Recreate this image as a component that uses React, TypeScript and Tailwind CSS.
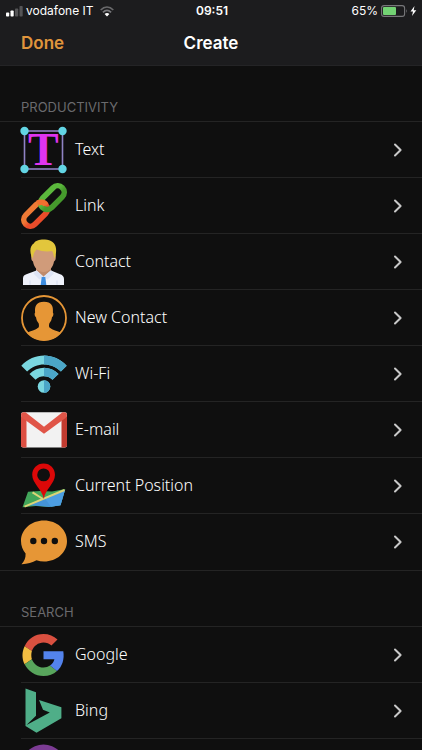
import React from "react";

function TextIcon() {
  return (
    <svg viewBox="0 0 46 46" className="size-[46px] overflow-visible" aria-hidden="true">
      <rect x="3.5" y="4" width="38" height="38" fill="none" stroke="#8f83c4" strokeWidth="1.6" />
      <text x="22.4" y="38.2" textAnchor="middle" fill="#e034f0" className="font-['Liberation_Serif',serif] text-[46px] font-bold">
        T
      </text>
      <g fill="#62d5e4">
        <circle cx="3.5" cy="4" r="4.2" />
        <circle cx="41.5" cy="4" r="4.2" />
        <circle cx="3.5" cy="42" r="4.2" />
        <circle cx="41.5" cy="42" r="4.2" />
      </g>
    </svg>
  );
}

function LinkIcon() {
  return (
    <svg viewBox="0 0 46 46" className="size-[46px]" aria-hidden="true" fill="none" strokeWidth="5.6">
      <defs>
        <linearGradient id="linkOrange" x1="0" y1="0" x2="0" y2="1">
          <stop offset="0.3" stopColor="#ef7a35" />
          <stop offset="0.7" stopColor="#ea4c2a" />
        </linearGradient>
        <linearGradient id="linkGreen" x1="0" y1="0" x2="0" y2="1">
          <stop offset="0.3" stopColor="#5bb83c" />
          <stop offset="0.7" stopColor="#459a2c" />
        </linearGradient>
      </defs>
      <rect x="-14" y="-6.5" width="28" height="13" rx="6.5" transform="translate(14.6 31.4) rotate(-45)" stroke="url(#linkOrange)" />
      <rect x="-14" y="-6.5" width="28" height="13" rx="6.5" transform="translate(31.4 14.6) rotate(-45)" stroke="url(#linkGreen)" />
      <path d="M16.500 20.300C19.500 18.600 23.300 18.900 25 22" stroke="#f0702f" />
    </svg>
  );
}

function ContactIcon() {
  return (
    <svg viewBox="0 0 46 46" className="size-[46px]" aria-hidden="true">
      <path d="M15 27h15v10l-7.500 5L15 39z" fill="#c08b6c" />
      <path d="M2 46V39.500C2 37 3.500 35.700 6 35L15.500 31.500 22.500 38 30 31.500 38.500 35C41.500 36 43 37.500 43 40V46z" fill="#eff2fb" />
      <path d="M9 46v-4.500M36 46v-4.500" stroke="#d5dcf0" strokeWidth="1" />
      <path d="M15.500 31.200 12.500 34.500 18.500 40.500 22.500 37.600zM30 31.200 33 34.500 26.500 40.500 22.500 37.600z" fill="#dde4f5" />
      <path d="M20.700 38h3.600l1 8h-5.600z" fill="#3d8de0" />
      <path d="M11.500 13C11.500 8 33.500 8 33.500 13L34.700 16C35 20 34.500 21.500 33 22.500 32 28.500 28 33 22.500 33S13 28.500 12 22.500C10.500 21.500 10 20 10.300 16z" fill="#d09b7a" />
      <path d="M11.500 19.500C8 13 9 6.500 13 4.200 14.500 1.500 19 .3 24 .6 30 .8 34.500 4 35 9.500 35.400 13 34.800 16.500 33.500 19.500 32.500 17 32.700 14 31 12 27 13 20 12.500 15.800 10.500 13 12.500 12.500 16 11.500 19.500z" fill="#e2c63c" />
    </svg>
  );
}

function NewContactIcon() {
  return (
    <svg viewBox="0 0 46 46" className="size-[46px]" aria-hidden="true">
      <circle cx="23" cy="23" r="22" fill="none" stroke="#e69636" strokeWidth="1.800" />
      <path d="M6 37.800C9.500 36 14.500 35.200 17.500 32.500 18.200 31.500 18 29.500 17.600 28.200 16 26.500 15.300 24.500 15 22.300 13.500 21.500 13.200 18.500 14.100 17.600 13.500 11 15.500 6.800 23 6.800S32.500 11 31.900 17.600C32.800 18.500 32.500 21.500 31 22.300 30.700 24.500 30 26.500 28.400 28.200 28 29.500 27.800 31.500 28.500 32.500 31.500 35.200 36.500 36 40 37.800 36 42.800 30 45.500 23 45.500S10 42.800 6 37.800z" fill="#e69636" />
    </svg>
  );
}

function WifiIcon() {
  return (
    <svg viewBox="0 0 46 46" className="size-[46px]" aria-hidden="true">
      <defs>
        <clipPath id="wifiRight">
          <path d="M23 0h23v46H23z" />
        </clipPath>
        <g id="wifiShape">
          <path d="M.3 14.800C13 1.200 33 1.200 45.700 14.800L39.900 20.500C30.500 11 15.500 11 6.100 20.500z" />
          <path d="M8.500 23C16.600 14.800 29.400 14.800 37.500 23L31.500 28.700C26.700 24.200 19.300 24.200 14.500 28.700z" />
          <circle cx="23" cy="35.500" r="6.300" />
        </g>
      </defs>
      <use href="#wifiShape" fill="#7ad7e0" />
      <use href="#wifiShape" fill="#4ba6c8" clipPath="url(#wifiRight)" />
    </svg>
  );
}

function MailIcon() {
  return (
    <svg viewBox="0 0 46 46" className="size-[46px]" aria-hidden="true">
      <rect x="0" y="5.300" width="46" height="35.200" rx="2.200" fill="#f2f2f2" />
      <path d="M0 9v29.300Q0 40.500 2.200 40.500H5.500V12z" fill="#dc4f42" />
      <path d="M46 9v29.300Q46 40.500 43.800 40.500H40.500V12z" fill="#c23b30" />
      <path d="M0 8Q0 5.300 2.500 5.300H4.500L23 19.700 41.500 5.300H43.500Q46 5.300 46 8 46 9.700 44.500 10.900L23 26.700 1.500 10.900Q0 9.700 0 8z" fill="#e05548" />
    </svg>
  );
}

function PositionIcon() {
  return (
    <svg viewBox="0 0 46 46" className="size-[46px]" aria-hidden="true">
      <path d="M7 28.800 19 28 31 28.500 44.300 26 39.500 42.300 28 44 15 43 1.500 44.300z" fill="#42a65a" />
      <path d="M20 35.500 44 27 39.500 42.300 28 44 13 42.500 8 42.500z" fill="#4594d8" />
      <path d="M24 35.500 30 43.700 39.500 42.300 44 27z" fill="#4d9ee2" />
      <path d="M11.500 29.300 22 36M3.500 43.600 43.500 27" stroke="#dcd477" strokeWidth="2" fill="none" />
      <path d="M22.600 35.500C21.600 27 11.200 20.500 11.200 11.800 11.200 5.500 16 .6 22.600.6S34 5.500 34 11.800C34 20.500 23.800 27 23 35.500zM22.600 5.500a6.400 6.400 0 1 0 0 12.800 6.400 6.400 0 0 0 0-12.800z" fill="#dc0808" fillRule="evenodd" />
    </svg>
  );
}

function SmsIcon() {
  return (
    <svg viewBox="0 0 46 46" className="size-[46px]" aria-hidden="true">
      <path d="M23 1.500C10 1.500 0 10.500 0 22 0 27 1.700 31 4.600 34.500 4.800 39 3.200 42.500.5 45.200 6 45.300 11.500 43.700 15.500 41.300 18 42.100 20.500 42.500 23 42.500 36 42.500 46 33.500 46 22S36 1.500 23 1.500z" fill="#e69636" />
      <g fill="#0f0f0f">
        <circle cx="12.300" cy="22" r="3.200" />
        <circle cx="23" cy="22" r="3.200" />
        <circle cx="33.800" cy="22" r="3.200" />
      </g>
    </svg>
  );
}

function GoogleIcon() {
  return (
    <svg viewBox="0 0 46 46" className="size-[46px]" aria-hidden="true">
      <path d="M3.600 14.200C7.200 6.600 14.300 2 22.500 2 28 2 32.800 4 36.500 7.500L30.400 13.600C28.300 11.600 25.700 10.500 22.500 10.500 17.200 10.500 12.700 14 10.900 19z" fill="#d95040" />
      <path d="M3.600 14.200C.8 20 .8 26.500 3.600 32.300L10.900 27.200C10.100 24.600 10.100 21.600 10.900 19z" fill="#f2bd42" />
      <path d="M3.600 32.300C7.200 39.500 14.200 44 22.500 44 27.800 44 32.500 42.200 36 39L29 33.500C27.200 34.700 25 35.500 22.500 35.500 17.200 35.500 12.700 32 10.900 27.200z" fill="#58a55c" />
      <path d="M22.500 19.200H42.300C43.600 27 41.300 34.500 36 39L29 33.500C31.300 32 32.900 29.800 33.400 27.200H22.500z" fill="#5383ec" />
    </svg>
  );
}

function BingIcon() {
  return (
    <svg viewBox="0 0 46 46" className="size-[46px]" aria-hidden="true">
      <path d="M4.500 .5 15 4.300V27.700L5.500 37 28.800 24.500 22 21.800 18 12 40.400 19.300V30.300L15.500 44.700 4.500 38.100z" fill="#4fae88" />
    </svg>
  );
}

function YahooIcon() {
  return (
    <svg viewBox="0 0 46 46" className="size-[46px]" aria-hidden="true">
      <circle cx="22.500" cy="23" r="22.500" fill="#7c3c94" />
      <path d="M12 14l10 12v9M33 14 22 26" stroke="#fff" strokeWidth="4" fill="none" />
    </svg>
  );
}

const sections = [
  {
    title: "PRODUCTIVITY",
    items: [
      { label: "Text", icon: <TextIcon /> },
      { label: "Link", icon: <LinkIcon /> },
      { label: "Contact", icon: <ContactIcon /> },
      { label: "New Contact", icon: <NewContactIcon /> },
      { label: "Wi-Fi", icon: <WifiIcon /> },
      { label: "E-mail", icon: <MailIcon /> },
      { label: "Current Position", icon: <PositionIcon /> },
      { label: "SMS", icon: <SmsIcon /> },
    ],
  },
  {
    title: "SEARCH",
    items: [
      { label: "Google", icon: <GoogleIcon /> },
      { label: "Bing", icon: <BingIcon /> },
      { label: "Yahoo", icon: <YahooIcon /> },
    ],
  },
];

function StatusBar() {
  return (
    <div className="grid h-[22px] grid-cols-[1fr_auto_1fr] items-center pr-1 pl-[6px] text-[12px] leading-none">
      <div className="flex items-center gap-[3px]">
        <svg viewBox="0 0 17 11" className="h-[11px] w-[17px]" aria-hidden="true">
          <rect x="0" y="6.500" width="3.200" height="4" rx=".8" fill="#fff" />
          <rect x="4.500" y="4.500" width="3.200" height="6" rx=".8" fill="#fff" />
          <rect x="9" y="2.500" width="3.200" height="8" rx=".8" fill="#555557" />
          <rect x="13.500" y="0" width="3.200" height="10.500" rx=".8" fill="#555557" />
        </svg>
        <span>vodafone IT</span>
        <svg viewBox="0 0 14 11" className="ml-[3px] h-[11px] w-[14px]" aria-hidden="true" fill="none" strokeWidth="1.700">
          <path d="M.7 4C4.500.2 9.500.2 13.300 4" stroke="#69696b" />
          <path d="M2.900 6.300C5.400 3.900 8.600 3.900 11.100 6.300" stroke="#77777a" />
          <path d="M4.600 7.900C6 6.600 8 6.600 9.400 7.900L7 10.500z" fill="#fff" />
        </svg>
      </div>
      <span className="font-semibold">09:51</span>
      <div className="flex items-center justify-end gap-[3px]">
        <span>65%</span>
        <svg viewBox="0 0 37 12" className="h-[12px] w-[37px]" aria-hidden="true">
          <rect x=".6" y=".6" width="23" height="10.800" rx="2.500" fill="none" stroke="#77777a" strokeWidth="1.100" />
          <rect x="2" y="2" width="13" height="8" rx="1" fill="#73d374" />
          <path d="M25 4q1.500 2 0 4z" fill="#77777a" />
          <path d="M33.500 1 29.500 6.500H32L31 11 35.300 5.200H32.700z" fill="#fff" />
        </svg>
      </div>
    </div>
  );
}

function Chevron() {
  return (
    <svg viewBox="0 0 10 14" className="h-[14px] w-[10px]" aria-hidden="true">
      <path d="M2 1.500 7.600 7 2 12.500" fill="none" stroke="#c9c9c9" strokeWidth="2" strokeLinecap="round" strokeLinejoin="round" />
    </svg>
  );
}

export default function App() {
  return (
    <div className="flex h-screen flex-col bg-[#0f0f0f] font-['Inter',sans-serif] text-white">
      <header className="shrink-0 border-b border-[#242426] bg-[#1c1c1e]">
        <StatusBar />
        <div className="grid h-[43px] grid-cols-[1fr_auto_1fr] items-center px-[21px] text-[17px] font-semibold">
          <button type="button" className="justify-self-start text-[#e0953c]">
            Done
          </button>
          <h1>Create</h1>
        </div>
      </header>
      <main className="min-h-0 flex-1 overflow-y-auto [scrollbar-width:none]">
        {sections.map((section) => (
          <section key={section.title}>
            <h2 className="flex h-14 items-end border-b border-[#242424] px-[21px] pb-1 text-[13px] text-[#6a6a6d]">
              {section.title}
            </h2>
            <ul className="border-b border-[#242424]">
              {section.items.map((item, i) => (
                <li key={item.label} className="pl-[21px]">
                  <button
                    type="button"
                    className={`flex h-14 w-full items-center gap-2 pr-[19px] text-left ${
                      i < section.items.length - 1 ? "border-b border-[#242424]" : ""
                    }`}
                  >
                    {item.icon}
                    <span className="flex-1 pb-[2px] font-['Noto_Sans',sans-serif] text-[16px] leading-6 font-light">
                      {item.label}
                    </span>
                    <Chevron />
                  </button>
                </li>
              ))}
            </ul>
          </section>
        ))}
      </main>
    </div>
  );
}
